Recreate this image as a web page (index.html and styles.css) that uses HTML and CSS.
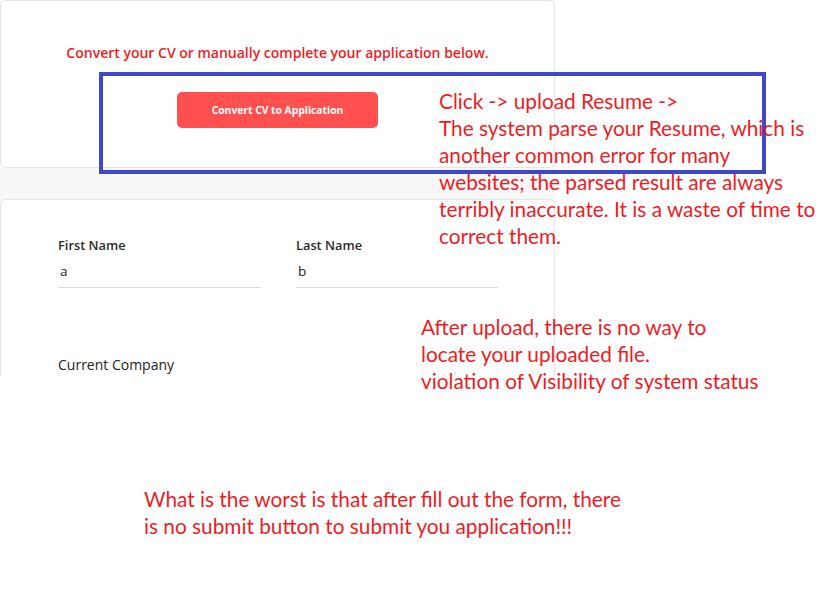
FILE: index.html
```html
<!DOCTYPE html>
<html>
<head>
<meta charset="utf-8">
<link rel="stylesheet" href="styles.css">
</head>
<body>
<div class="page">
  <div class="column">
    <section class="card intro">
      <p class="lead">Convert your CV or manually complete your application below.</p>
      <button class="convert">Convert CV to Application</button>
    </section>
    <section class="card form">
      <div class="row">
        <div class="field">
          <label>First Name</label>
          <div class="input">a</div>
        </div>
        <div class="field">
          <label>Last Name</label>
          <div class="input">b</div>
        </div>
      </div>
      <div class="plain">Current Company</div>
    </section>
  </div>

  <div class="highlight"></div>
  <div class="note note1">Click -&gt; upload Resume -&gt;<br>The system parse your Resume, which is<br>another common error for many<br>websites; the parsed result are always<br>terribly inaccurate. It is a waste of time to<br>correct them.</div>
  <div class="note note2">After upload, there is no way to<br>locate your uploaded file.<br>violation of Visibility of system status</div>
  <div class="note note3">What is the worst is that after fill out the form, there<br>is no submit button to submit you application!!!</div>
</div>
</body>
</html>
```

FILE: styles.css
```css
html, body {
  margin: 0;
  padding: 0;
  background: #ffffff;
}
.page {
  position: relative;
  width: 832px;
  height: 593px;
  overflow: hidden;
  font-family: "Open Sans", "Noto Sans", sans-serif;
}
.column {
  width: 555px;
  height: 376px;
  overflow: hidden;
  background: #f7f7f7;
  display: flex;
  flex-direction: column;
  gap: 31px;
}
.card {
  background: #ffffff;
  border: 1px solid #e6e6e6;
  border-radius: 6px;
  box-sizing: border-box;
  flex: none;
}
.intro {
  height: 168px;
  display: flex;
  flex-direction: column;
  align-items: center;
  padding-top: 42px;
}
.lead {
  margin: 0;
  color: #f21c24;
  font-size: 14px;
  font-weight: 600;
  line-height: 20px;
}
.convert {
  margin-top: 29px;
  width: 201px;
  height: 36px;
  border: none;
  border-radius: 5px;
  background: #ff5050;
  color: #ffffff;
  font-family: "Open Sans", "Noto Sans", sans-serif;
  font-size: 10.3px;
  font-weight: 700;
  padding: 0;
}
.form {
  height: 260px;
  padding: 37px 56px 0 57px;
}
.row {
  display: flex;
  gap: 35px;
}
.field {
  width: 203px;
}
.field:last-child {
  width: 202px;
}
.field label {
  display: block;
  font-size: 12.8px;
  font-weight: 600;
  color: #2b2b2b;
  line-height: 17px;
}
.input {
  margin-top: 7px;
  padding: 0 0 6px 2px;
  font-size: 13.5px;
  color: #222;
  line-height: 20px;
  border-bottom: 1px solid #dddddd;
}
.plain {
  margin-top: 67px;
  font-size: 14px;
  color: #222;
  line-height: 20px;
}
.highlight {
  position: absolute;
  left: 99px;
  top: 72px;
  width: 667px;
  height: 102px;
  box-sizing: border-box;
  border: 4px solid #3f48cc;
}
.note {
  position: absolute;
  font-family: "Lato", "Open Sans", sans-serif;
  font-size: 20.8px;
  line-height: 27px;
  color: #ed1c24;
  white-space: nowrap;
}
.note1 { left: 439px; top: 87px; }
.note2 { left: 421px; top: 313px; }
.note3 { left: 144px; top: 485px; }
```
